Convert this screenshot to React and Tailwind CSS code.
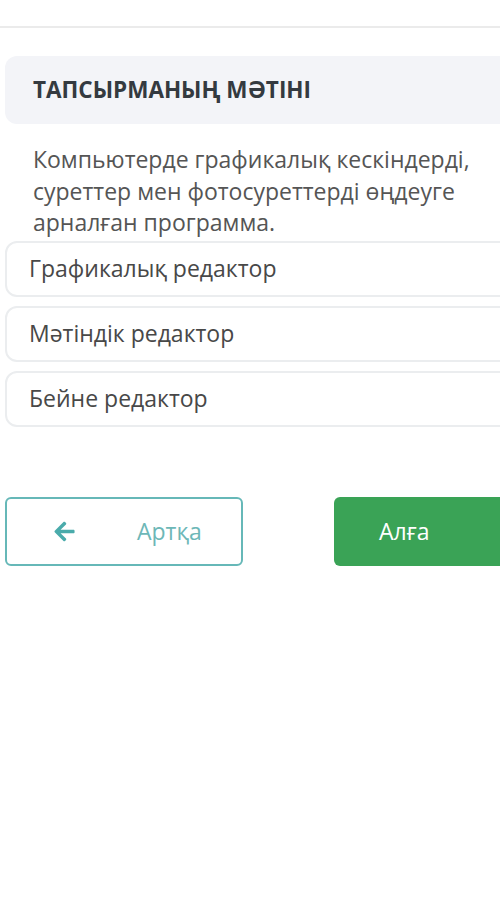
const options = ['Графикалық редактор', 'Мәтіндік редактор', 'Бейне редактор'];

function ArrowIcon() {
  return (
    <svg viewBox="0 0 448 512" className="w-[23px] h-[23px] ml-[46px] shrink-0" fill="#4aabab">
      <path d="M257.5 445.1l-22.2 22.2c-9.4 9.4-24.6 9.4-33.9 0L7 273c-9.4-9.4-9.4-24.6 0-33.9L201.4 44.7c9.4-9.4 24.6-9.4 33.9 0l22.2 22.2c9.5 9.5 9.3 25-.4 34.3L136.6 216H424c13.3 0 24 10.7 24 24v32c0 13.3-10.7 24-24 24H136.6l120.5 114.8c9.8 9.3 10 24.8.4 34.3z" />
    </svg>
  );
}

export default function App() {
  return (
    <div className="w-[500px] h-[914px] overflow-hidden bg-white" style={{ fontFamily: '"Open Sans", sans-serif' }}>
      <div className="h-[28px] border-b-2 border-[#ebebeb]" />

      <div className="mt-[28px] ml-[5px] -mr-4 h-[68px] rounded-l-xl bg-[#f3f4f8] flex items-center pl-[28px]">
        <h1 className="text-[22.5px] font-bold text-[#343a40]">ТАПСЫРМАНЫҢ МӘТІНІ</h1>
      </div>

      <p className="mt-[20px] pl-[33px] pr-4 text-[23px] leading-[31.5px] text-[#555]">
        Компьютерде графикалық кескіндерді, суреттер мен фотосуреттерді өңдеуге арналған программа.
      </p>

      <div className="mt-[2px] flex flex-col gap-[9px]">
        {options.map((o) => (
          <div key={o} className="ml-[5px] -mr-4 h-[56px] rounded-xl border-2 border-[#ebedef] flex items-center pl-[22px] text-[23px] text-[#484848]">
            {o}
          </div>
        ))}
      </div>

      <div className="mt-[70px] flex items-center">
        <button className="shrink-0 ml-[5px] w-[238px] h-[69px] rounded-md border-2 border-[#66b8b8] flex items-center text-[23px] text-[#6db7b7]">
          <ArrowIcon />
          <span className="ml-[61px]">Артқа</span>
        </button>
        <button className="shrink-0 ml-[91px] w-[200px] h-[69px] rounded-md bg-[#3aa356] flex items-center pl-[45px] text-[23px] text-white">
          Алға
        </button>
      </div>
    </div>
  );
}
